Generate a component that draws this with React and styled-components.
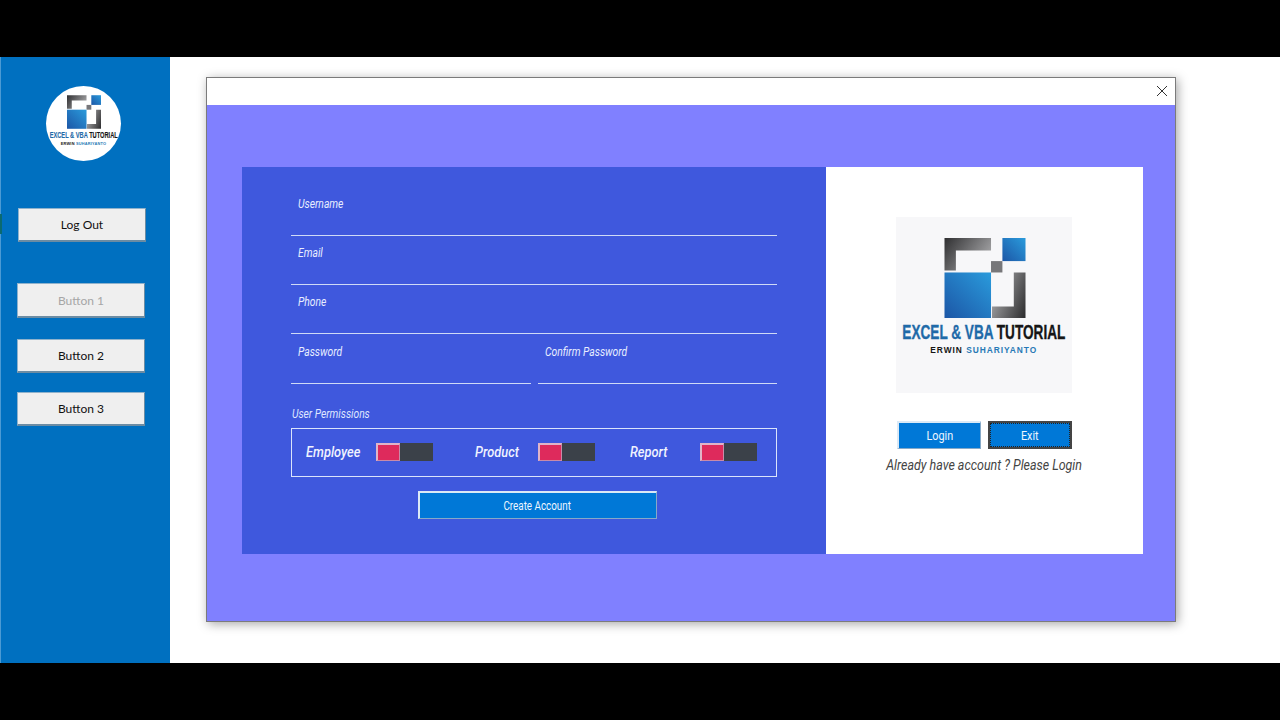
import React from "react";
import styled, { createGlobalStyle, css } from "styled-components";

const Global = createGlobalStyle`
  html, body { margin: 0; padding: 0; background: #000; }
  * { box-sizing: border-box; }
  #root { width: 1280px; height: 720px; overflow: hidden; }
`;

const condensed = css`
  font-family: Roboto, "Liberation Sans", sans-serif;
  display: inline-block;
  white-space: nowrap;
`;

const Screen = styled.div`
  width: 1280px;
  height: 720px;
  padding: 57px 0;
  background: #000;
`;
const Desktop = styled.div`
  display: flex;
  height: 606px;
  background: #fff;
`;
const Sidebar = styled.aside`
  position: relative;
  flex: 0 0 170px;
  display: flex;
  flex-direction: column;
  align-items: flex-start;
  padding: 29px 0 0 16px;
  background: #0070c0;
  border-left: 1px solid #4b9ad4;
`;
const EdgeMark = styled.span`
  position: absolute;
  left: -1px;
  top: 157px;
  width: 2px;
  height: 20px;
  background: #0b6a70;
`;
const Badge = styled.div`
  display: flex;
  flex-direction: column;
  align-items: center;
  align-self: flex-start;
  width: 75px;
  height: 75px;
  margin-left: 29px;
  margin-bottom: 47px;
  padding-top: 9px;
  border-radius: 50%;
  background: #fff;
  overflow: hidden;
`;
const BadgeTitle = styled.div`
  font: 700 9.8px/10px "Liberation Sans", sans-serif;
  margin-top: 1px;
  white-space: nowrap;
  transform: scaleX(0.58);
  color: #1f6aa8;
  -webkit-text-stroke: 0.15px currentColor;
  & b { color: #151515; }
`;
const BadgeSub = styled.div`
  font: 700 3.9px/6px "Liberation Sans", sans-serif;
  margin-top: 1px;
  letter-spacing: 0.2px;
  white-space: nowrap;
  color: #2779b5;
  & b { color: #151515; }
`;
const SideButton = styled.button`
  width: 128px;
  height: ${(p) => p.$h}px;
  margin-left: ${(p) => p.$indent || 0}px;
  margin-bottom: ${(p) => p.$after}px;
  padding: 0;
  background: #efefef;
  border: 1px solid #8fb2cc;
  border-bottom: 2px solid #6c8ca3;
  border-right-color: #6c8ca3;
  font: 400 12px "Lato", "Open Sans", sans-serif;
  color: ${(p) => (p.disabled ? "#a6a6a6" : "#111")};
`;

const Content = styled.main`
  flex: 1;
  padding: 20px 0 0 36px;
`;
const Window = styled.section`
  width: 970px;
  height: 545px;
  display: flex;
  flex-direction: column;
  border: 1px solid #7b7b7b;
  box-shadow: 2px 2px 10px rgba(0, 0, 0, 0.35);
  background: #8080ff;
`;
const TitleBar = styled.header`
  flex: 0 0 27px;
  display: flex;
  align-items: center;
  justify-content: flex-end;
  padding: 0 7px 2px 0;
  background: #fff;
`;
const WindowBody = styled.div`
  flex: 1;
  padding: 62px 32px 0 35px;
`;
const Card = styled.div`
  display: flex;
  width: 901px;
  height: 387px;
`;
const FormPane = styled.form`
  flex: 0 0 584px;
  padding: 20px 49px 0;
  background: #3f58dd;
`;
const Field = styled.label`
  display: block;
  flex: 1;
  height: 49px;
  padding: 7px 0 0 7px;
  border-bottom: 1px solid #cfdaf6;
`;
const FieldLabel = styled.span`
  ${condensed}
  font-size: 12px;
  line-height: 14px;
  font-style: italic;
  color: #e8eeff;
  transform: scaleX(0.86);
  transform-origin: left center;
`;
const HiddenInput = styled.input`
  display: block;
  width: 100%;
  height: 20px;
  border: 0;
  padding: 0;
  background: transparent;
  outline: 0;
`;
const SplitRow = styled.div`
  display: flex;
  gap: 7px;
  margin-top: 1px;
`;
const PermissionsTitle = styled.div`
  margin: 20px 0 10px 1px;
  height: 14px;
  & > span {
    ${condensed}
    font-size: 12px;
    line-height: 14px;
    font-style: italic;
    color: #dfe6ff;
    transform: scaleX(0.855);
    transform-origin: left center;
  }
`;
const PermissionsBox = styled.div`
  display: flex;
  align-items: center;
  height: 49px;
  padding: 0 0 2px 14px;
  border: 1px solid #dbe4fb;
`;
const Permission = styled.div`
  flex: 0 0 ${(p) => p.$width}px;
  display: flex;
  align-items: center;
`;
const PermissionName = styled.span`
  flex: 0 0 ${(p) => p.$width}px;
  & > span {
    ${condensed}
    font-size: 14.5px;
    font-weight: 500;
    font-style: italic;
    color: #f0f3ff;
    transform: scaleX(0.885);
    transform-origin: left center;
  }
`;
const Toggle = styled.span`
  display: flex;
  width: 57px;
  height: 18px;
  background: #3b4149;
`;
const ToggleKnob = styled.span`
  width: 24px;
  height: 18px;
  background: #de2a5c;
  border-style: solid;
  border-width: 2px 1px 1px 2px;
  border-color: #e0b4c8 #c98aa8 #c98aa8 #e0b4c8;
`;
const CreateRow = styled.div`
  display: flex;
  justify-content: center;
  margin: 14px 0 0 6px;
`;
const PrimaryButton = styled.button`
  width: ${(p) => p.$width}px;
  height: 28px;
  padding: 0;
  background: #0078d7;
  border: 1px solid #86a9c8;
  border-top: 2px solid #dbe9f6;
  border-left: 2px solid #dbe9f6;
  color: #eef6ff;
  & > span {
    ${condensed}
    font-size: 12px;
    transform: scaleX(${(p) => p.$scale || 0.9});
  }
`;
const ExitButton = styled(PrimaryButton)`
  border: 2px solid #444;
  outline: 1px dotted #222;
  outline-offset: -3px;
`;
const InfoPane = styled.div`
  flex: 1;
  display: flex;
  flex-direction: column;
  align-items: center;
  padding-top: 50px;
  background: #fff;
`;
const LogoTile = styled.div`
  display: flex;
  flex-direction: column;
  align-items: center;
  width: 176px;
  height: 176px;
  margin-right: 2px;
  padding-top: 21px;
  background: #f7f7f9;
  & > svg { margin-left: 2px; }
`;
const LogoTitle = styled.div`
  margin-top: 4px;
  font: 700 20px/20px "Liberation Sans", sans-serif;
  white-space: nowrap;
  color: #1f6aa8;
  -webkit-text-stroke: 0.35px currentColor;
  transform: scaleX(0.68);
  & b { color: #151515; }
`;
const LogoSub = styled.div`
  margin-top: 2px;
  font: 700 9.5px/12px "Liberation Sans", sans-serif;
  letter-spacing: 1.1px;
  white-space: nowrap;
  color: #2779b5;
  transform: scaleX(0.88);
  & b { color: #151515; }
`;
const ButtonRow = styled.div`
  display: flex;
  gap: 7px;
  margin-top: 28px;
`;
const Hint = styled.p`
  margin: 7px 0 0;
  & > span {
    ${condensed}
    font-size: 14.5px;
    line-height: 20px;
    font-style: italic;
    color: #444;
    transform: scaleX(0.858);
  }
`;

function LogoMark({ id, width, height }) {
  return (
    <svg width={width} height={height} viewBox="0 0 242 239" aria-hidden="true">
      <defs>
        <linearGradient id={`${id}a`} x1="0" y1="0" x2="1" y2="0.5">
          <stop offset="0" stopColor="#2f2f31" />
          <stop offset="1" stopColor="#a3a3a5" />
        </linearGradient>
        <linearGradient id={`${id}b`} x1="1" y1="1" x2="0" y2="0.5">
          <stop offset="0" stopColor="#2b2b2d" />
          <stop offset="1" stopColor="#a3a3a5" />
        </linearGradient>
        <linearGradient id={`${id}c`} x1="1" y1="0" x2="0" y2="1">
          <stop offset="0" stopColor="#2a9bdc" />
          <stop offset="1" stopColor="#1c56a6" />
        </linearGradient>
      </defs>
      <polygon points="0,0 139,0 139,37 34,37 34,97 0,97" fill={`url(#${id}a)`} />
      <rect x="173" y="0" width="69" height="69" fill={`url(#${id}c)`} />
      <rect x="139" y="69" width="34" height="34" fill="#77777a" />
      <rect x="0" y="103" width="139" height="136" fill={`url(#${id}c)`} />
      <polygon points="207,103 242,103 242,239 142,239 142,205 207,205" fill={`url(#${id}b)`} />
    </svg>
  );
}

function Close() {
  return (
    <svg width="12" height="12" viewBox="0 0 12 12" aria-hidden="true">
      <path d="M1 1 L11 11 M11 1 L1 11" stroke="#333" strokeWidth="1" fill="none" />
    </svg>
  );
}

const permissions = [
  { name: "Employee", width: 169, label: 70 },
  { name: "Product", width: 155, label: 63 },
  { name: "Report", width: 146, label: 70 },
];

export default function App() {
  return (
    <Screen>
      <Global />
      <Desktop>
        <Sidebar>
          <EdgeMark />
          <Badge>
            <LogoMark id="s" width={34} height={34} />
            <BadgeTitle>EXCEL &amp; VBA <b>TUTORIAL</b></BadgeTitle>
            <BadgeSub><b>ERWIN</b> SUHARIYANTO</BadgeSub>
          </Badge>
          <SideButton $h={34} $after={41} $indent={1}>Log Out</SideButton>
          <SideButton $h={35} $after={21} disabled>Button 1</SideButton>
          <SideButton $h={34} $after={19}>Button 2</SideButton>
          <SideButton $h={34} $after={0}>Button 3</SideButton>
        </Sidebar>
        <Content>
          <Window>
            <TitleBar><Close /></TitleBar>
            <WindowBody>
              <Card>
                <FormPane onSubmit={(e) => e.preventDefault()}>
                  {["Username", "Email", "Phone"].map((l) => (
                    <Field key={l}>
                      <FieldLabel>{l}</FieldLabel>
                      <HiddenInput />
                    </Field>
                  ))}
                  <SplitRow>
                    <Field>
                      <FieldLabel>Password</FieldLabel>
                      <HiddenInput type="password" />
                    </Field>
                    <Field>
                      <FieldLabel>Confirm Password</FieldLabel>
                      <HiddenInput type="password" />
                    </Field>
                  </SplitRow>
                  <PermissionsTitle><span>User Permissions</span></PermissionsTitle>
                  <PermissionsBox>
                    {permissions.map((p) => (
                      <Permission key={p.name} $width={p.width}>
                        <PermissionName $width={p.label}><span>{p.name}</span></PermissionName>
                        <Toggle><ToggleKnob /></Toggle>
                      </Permission>
                    ))}
                  </PermissionsBox>
                  <CreateRow>
                    <PrimaryButton $width={239} $scale={0.82}><span>Create Account</span></PrimaryButton>
                  </CreateRow>
                </FormPane>
                <InfoPane>
                  <LogoTile>
                    <LogoMark id="l" width={82} height={80} />
                    <LogoTitle>EXCEL &amp; VBA <b>TUTORIAL</b></LogoTitle>
                    <LogoSub><b>ERWIN</b> SUHARIYANTO</LogoSub>
                  </LogoTile>
                  <ButtonRow>
                    <PrimaryButton $width={84}><span>Login</span></PrimaryButton>
                    <ExitButton $width={84}><span>Exit</span></ExitButton>
                  </ButtonRow>
                  <Hint><span>Already have account ? Please Login</span></Hint>
                </InfoPane>
              </Card>
            </WindowBody>
          </Window>
        </Content>
      </Desktop>
    </Screen>
  );
}
